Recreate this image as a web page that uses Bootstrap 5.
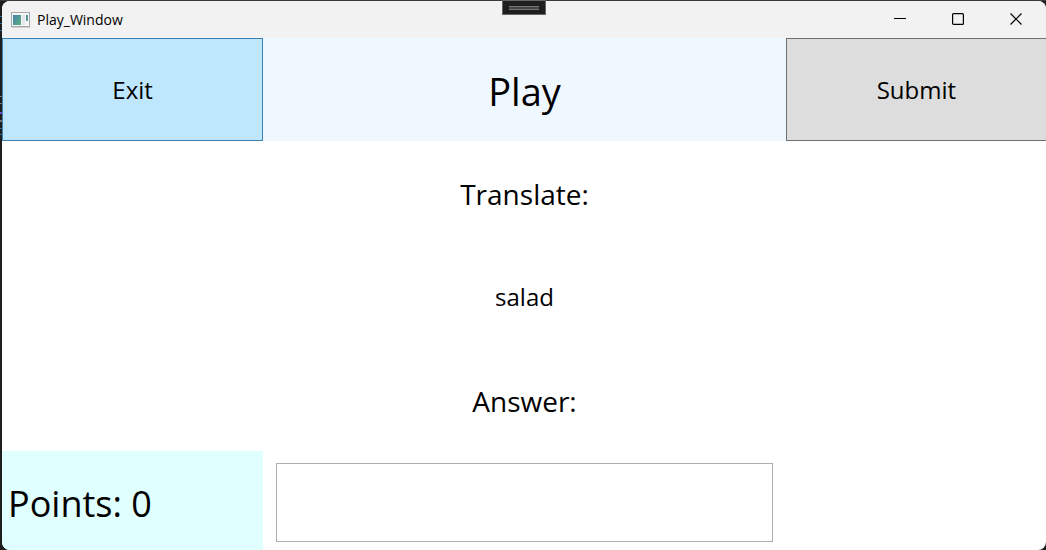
<!DOCTYPE html>
<html lang="en">
<head>
<meta charset="utf-8">
<meta name="viewport" content="width=device-width, initial-scale=1">
<title>Play_Window</title>
<link href="https://cdn.jsdelivr.net/npm/bootstrap@5.3.0/dist/css/bootstrap.min.css" rel="stylesheet">
<style>
body { font-family: "Open Sans", "Noto Sans", sans-serif; color: #000; background: #1e1e1e; padding-left: 2px;
  background-image: linear-gradient(#3b393b 0 1px, transparent 1px); }
/* slivers of the code editor that show beside the window */
.editor-edge { width: 2px; left: 0; top: 0; height: 150px;
  background: linear-gradient(transparent 16px, #2f6f9f 16px 17px, transparent 17px 23px, #2f6f9f 23px 24px, transparent 24px 30px, #2f6f9f 30px 31px, transparent 31px 96px, #777 96px 97px, transparent 97px 103px, #777 103px 104px, transparent 104px 112px, #6a50c8 112px 114px, transparent 114px 120px, #777 120px 122px, transparent 122px 128px, #2f6f9f 128px 129px, transparent 129px 134px, #2f6f9f 134px 135px, transparent 135px); }
.desktop { height: 100vh; padding-top: 1px; }
.app-window { background: #fff; border-radius: 8px; }
.title-bar { height: 37px; background: #f2f2f2; padding: 0 1px 0 9px; }
.title-text { font-size: 14px; line-height: 20px; margin-left: 7px; }
.caption-btn { width: 58px; height: 37px; border: 0; background: none; padding: 0 0 2px; color: #000; }
.debug-bar { width: 44px; height: 15px; background: #1e1e1e; border: 1px solid #666; padding: 0; }
/* the client area runs slightly past the frame and is clipped by it */
.client { margin: 0 -1px -4px 0; min-height: 0; }
.client > .row { min-height: 0; }
.action { border: 1px solid #707070; background: #ddd; color: #000; font-size: 24px; line-height: 32px; padding: 1px 0 0; }
.action.exit { background: #bee6fd; border-color: #3c7fb1; }
.heading-cell { background: #f0f8ff; }
.heading-text { font-size: 38px; line-height: 52px; padding-top: 2px; }
.points { background: #e0ffff; font-size: 36px; line-height: 52px; padding: 3px 0 0 6px; }
.prompt-text { font-size: 28px; line-height: 40px; padding-top: 3px; }
.word-text { font-size: 24px; line-height: 32px; padding-top: 2px; }
.answer-cell { padding: 12px 13px; }
.answer-box { border: 1px solid #abadb3; border-radius: 0; font-size: 28px; padding: 0 4px; }
</style>
</head>
<body>
<div class="editor-edge position-absolute"></div>
<div class="desktop position-relative">
  <div class="app-window d-flex flex-column h-100 overflow-hidden">
    <header class="title-bar d-flex align-items-center flex-shrink-0">
      <svg width="19" height="16" viewBox="0 0 19 16" aria-hidden="true">
        <defs><linearGradient id="g" x1="0" y1="0" x2="1" y2="1"><stop offset="0" stop-color="#4380b0"/><stop offset="1" stop-color="#60b078"/></linearGradient></defs>
        <rect x=".5" y=".5" width="18" height="14" fill="#f4f6f7" stroke="#a4a8ac"/>
        <path d="M1 15.500h18" stroke="#d0d0d0"/>
        <rect x="2" y="3" width="8" height="10" fill="url(#g)"/>
        <rect x="11" y="3" width="3" height="10" fill="#e3e7eb"/>
        <rect x="15" y="3" width="2" height="6" fill="url(#g)"/>
      </svg>
      <span class="title-text me-auto">Play_Window</span>
      <button type="button" class="caption-btn" aria-label="Minimize"><svg class="d-block mx-auto" width="12" height="12"><path d="M0 5.500h12" stroke="#000"/></svg></button>
      <button type="button" class="caption-btn" aria-label="Maximize"><svg class="d-block mx-auto" width="12" height="12"><rect x=".6" y=".6" width="10.800" height="10.800" rx="1" fill="none" stroke="#000" stroke-width="1.200"/></svg></button>
      <button type="button" class="caption-btn" aria-label="Close"><svg class="d-block mx-auto" width="12" height="12"><path d="M.5.5l11 11m0-11l-11 11" stroke="#000" stroke-width="1.200"/></svg></button>
    </header>
    <main class="client d-flex flex-column flex-fill">
      <div class="row g-0 flex-fill h-100">
        <div class="col-3 d-flex"><button type="button" class="action exit flex-fill">Exit</button></div>
        <div class="col-6 heading-cell d-flex align-items-center justify-content-center"><h1 class="heading-text fw-normal m-0">Play</h1></div>
        <div class="col-3 d-flex"><button type="submit" form="play" class="action flex-fill">Submit</button></div>
      </div>
      <div class="row g-0 flex-fill h-100 justify-content-center align-items-center"><div class="col-6 text-center prompt-text">Translate:</div></div>
      <div class="row g-0 flex-fill h-100 justify-content-center align-items-center"><div class="col-6 text-center word-text">salad</div></div>
      <div class="row g-0 flex-fill h-100 justify-content-center align-items-center"><label for="answer" class="col-6 text-center prompt-text">Answer:</label></div>
      <div class="row g-0 flex-fill h-100">
        <div class="col-3 points d-flex align-items-center">Points: 0</div>
        <form id="play" class="col-6 answer-cell d-flex"><input id="answer" type="text" class="answer-box flex-fill w-100" autocomplete="off"></form>
      </div>
    </main>
  </div>
  <button type="button" class="debug-bar position-absolute top-0 start-50 translate-middle-x" aria-label="Debug toolbar"><svg class="d-block mx-auto" width="30" height="4"><path d="M0 .5h30M0 3.500h30" stroke="#777"/><path d="M0 2h30" stroke="#444" stroke-width="2"/></svg></button>
</div>
<script src="https://cdn.jsdelivr.net/npm/bootstrap@5.3.0/dist/js/bootstrap.bundle.min.js"></script>
</body>
</html>
